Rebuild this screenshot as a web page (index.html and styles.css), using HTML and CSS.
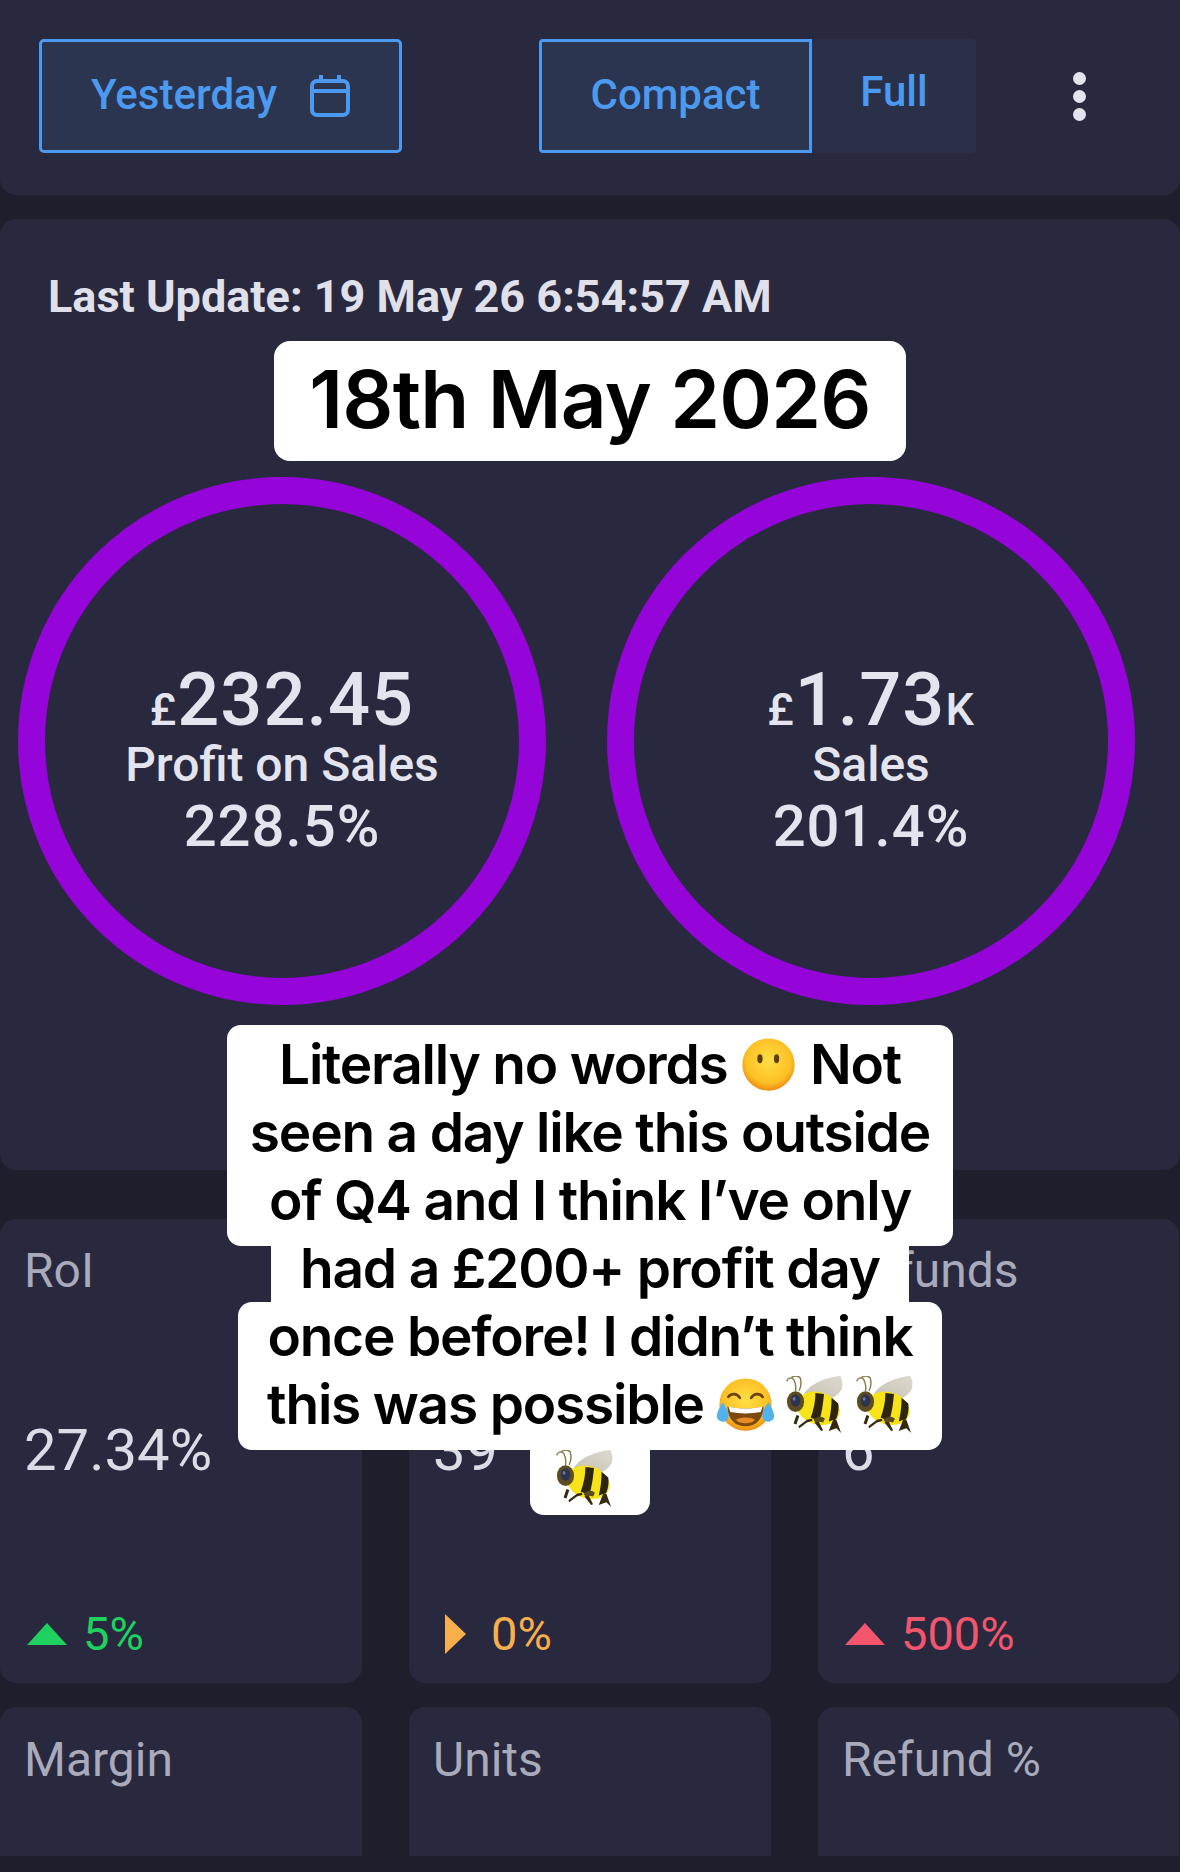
FILE: index.html
```html
<!DOCTYPE html>
<html lang="en">
<head>
<meta charset="utf-8">
<title>Dashboard</title>
<link rel="stylesheet" href="styles.css">
</head>
<body>
<svg class="defs" width="0" height="0" aria-hidden="true">
  <defs>
    <radialGradient id="faceGrad" cx="50%" cy="42%" r="58%">
      <stop offset="0" stop-color="#ffdf45"/>
      <stop offset="0.75" stop-color="#fcc024"/>
      <stop offset="1" stop-color="#ee8c10"/>
    </radialGradient>
    <linearGradient id="wingGrad" x1="1" y1="0" x2="0" y2="1">
      <stop offset="0" stop-color="#ddd9cf"/>
      <stop offset="1" stop-color="#c7c2b4"/>
    </linearGradient>
    <symbol id="bee" viewBox="0 0 60 60">
      <path d="M19 19C24 9 42 1 57 0c3 4 3 12 1 15-3 5-8 8-13 9z" fill="url(#wingGrad)"/>
      <ellipse cx="34" cy="34" rx="23" ry="17" transform="rotate(18 34 34)" fill="#f8e21a"/>
      <path d="M31 18l9 1c-1 10-2 19-5 28l-9-3c3-8 5-17 5-26zM48 23l7 6c1 5 0 11-2 16l-8 3c2-8 3-16 3-25z" fill="#2e2510"/>
      <path d="M8 50l3-9 3 1-3 9zM13 53l9-7 5-1 1 2-6 2-8 6zM30 49l7 9 2-1-5-10zM45 58l5-13 3 1 5 14-5-5-3 1z" fill="#35290f"/>
      <path d="M29 46c4-4 9-4 12-1l-2 4c-3-1-6-1-8 0z" fill="#5b4a1c"/>
      <ellipse cx="10" cy="27" rx="9" ry="11" fill="#5c4c20"/>
      <ellipse cx="10" cy="26" rx="5" ry="6.500" fill="#2c3550"/>
      <ellipse cx="8.500" cy="24" rx="1.500" ry="2" fill="#6d7aa0"/>
      <path d="M10 16C11 10 9 4 7 2.500 5 1.500 2 2 1 5M14 15c2-4 2-9 1-13C13 0 9 0 6.500 1" fill="none" stroke="#8a7a48" stroke-width="1.500" stroke-linecap="round"/>
    </symbol>
    <symbol id="face" viewBox="0 0 60 60">
      <circle cx="30" cy="30" r="27.500" fill="url(#faceGrad)"/>
      <ellipse cx="21" cy="24" rx="2.800" ry="4.700" fill="#5f3f0f"/>
      <ellipse cx="38.500" cy="24" rx="2.800" ry="4.700" fill="#5f3f0f"/>
    </symbol>
    <symbol id="laugh" viewBox="0 0 60 60">
      <circle cx="30" cy="30" r="27.500" fill="url(#faceGrad)"/>
      <path d="M12 22c3-4 9-4 12 1M36 23c3-5 9-5 12-1" fill="none" stroke="#6b430f" stroke-width="2.800" stroke-linecap="round"/>
      <path d="M11 32c12 3 26 3 38 0 0 13-8 21-19 21S11 45 11 32z" fill="#7c4a0d"/>
      <path d="M20 46c5-3 15-3 20 0-3 5-17 5-20 0z" fill="#e98a22"/>
      <path d="M12 32c12 3 24 3 36 0l-2 6c-10 2-22 2-32 0z" fill="#fff"/>
      <path d="M6 28c-4 6-7 12-6 16 1 4 8 6 11 2 3-4 0-12-5-18zM54 28c4 6 7 12 6 16-1 4-8 6-11 2-3-4 0-12 5-18z" fill="#53b2ee"/>
    </symbol>
  </defs>
</svg>

<header class="card toolbar">
  <button class="btn btn-date active"><span class="btn-text">Yesterday</span>
    <svg class="cal" viewBox="0 0 40 42" fill="none" stroke="currentColor" stroke-width="4" stroke-linejoin="round">
      <rect x="2" y="6" width="36" height="34" rx="5"/>
      <path d="M2 16h36M11 0v6M29 0v6"/>
    </svg>
  </button>
  <div class="segment">
    <button class="btn seg-compact active">Compact</button>
    <button class="btn seg-full">Full</button>
  </div>
  <div class="dots"><i></i><i></i><i></i></div>
</header>

<section class="card summary">
  <p class="updated">Last Update: 19 May 26 6:54:57 AM</p>
  <div class="rings">
    <div class="ring">
      <div class="amount"><span class="unit">£</span>232.45</div>
      <div class="ring-label">Profit on Sales</div>
      <div class="pct">228.5%</div>
    </div>
    <div class="ring">
      <div class="amount"><span class="unit">£</span>1.73<span class="unit">K</span></div>
      <div class="ring-label">Sales</div>
      <div class="pct">201.4%</div>
    </div>
  </div>
</section>

<section class="stats">
  <article class="card stat">
    <div class="stat-label">RoI</div>
    <div class="stat-value">27.34%</div>
    <div class="trend up"><span class="tri"></span>5%</div>
  </article>
  <article class="card stat">
    <div class="stat-label">Orders</div>
    <div class="stat-value">39</div>
    <div class="trend flat"><span class="tri"></span>0%</div>
  </article>
  <article class="card stat">
    <div class="stat-label">Refunds</div>
    <div class="stat-value">6</div>
    <div class="trend bad"><span class="tri"></span>500%</div>
  </article>
  <article class="card stat short">
    <div class="stat-label">Margin</div>
  </article>
  <article class="card stat short">
    <div class="stat-label">Units</div>
  </article>
  <article class="card stat short">
    <div class="stat-label">Refund %</div>
  </article>
</section>

<div class="date-tag">18th May 2026</div>

<div class="caption">
  <div class="cap-group g1">
    <div>Literally no words <svg class="emoji"><use href="#face"/></svg> Not</div>
    <div>seen a day like this outside</div>
    <div>of Q4 and I think I’ve only</div>
  </div>
  <div class="cap-group g2">
    <div>had a £200+ profit day</div>
  </div>
  <div class="cap-group g3">
    <div>once before! I didn’t think</div>
    <div>this was possible <svg class="emoji"><use href="#laugh"/></svg> <svg class="emoji"><use href="#bee"/></svg> <svg class="emoji"><use href="#bee"/></svg></div>
  </div>
  <div class="cap-group g4">
    <div><svg class="emoji"><use href="#bee"/></svg></div>
  </div>
</div>
</body>
</html>
```
FILE: styles.css
```css
* { box-sizing: border-box; }
html, body { margin: 0; padding: 0; }
body {
  position: relative;
  width: 1180px;
  height: 1872px;
  overflow: hidden;
  background: #1e1f2d;
  font-family: Roboto, "Liberation Sans", sans-serif;
  color: #e4e4ee;
}
.defs { position: absolute; }
.card { background: #28293e; border-radius: 16px; }

.toolbar {
  height: 195px;
  border-radius: 0 0 16px 16px;
  padding: 39px 0 0 39px;
  display: flex;
  align-items: flex-start;
}
.btn {
  font-family: Roboto, sans-serif;
  font-size: 42px;
  font-weight: 500;
  color: #4b9af0;
  background: #2b3550;
  border: 0;
  padding: 0;
  height: 114px;
}
.active { border: 3px solid #4b9af0; }
.btn-text { padding-bottom: 4px; }
.btn-date {
  width: 363px;
  border-radius: 5px;
  display: flex;
  align-items: center;
  justify-content: center;
  gap: 33px;
}
.cal { width: 40px; height: 42px; }
.segment { display: flex; margin-left: 137px; }
.seg-compact { width: 273px; border-radius: 4px 0 0 4px; padding-bottom: 4px; }
.seg-full {
  width: 164px;
  border-radius: 0 4px 4px 0;
  padding-bottom: 10px;
  background: #2a3048;
}
.dots {
  margin-left: 97px;
  margin-top: 33px;
  display: flex;
  flex-direction: column;
  gap: 5px;
}
.dots i { width: 13px; height: 13px; border-radius: 50%; background: #e4e4ee; }

.summary {
  margin-top: 24px;
  height: 951px;
  padding: 52px 0 0 48px;
  position: relative;
}
.updated { margin: 0; font-size: 45px; font-weight: 700; line-height: 52px; color: #e0e0ea; }
.rings {
  display: flex;
  gap: 61px;
  margin: 154px 0 0 -30px;
}
.ring {
  width: 528px;
  height: 528px;
  border: 27px solid #9504d8;
  border-radius: 50%;
  display: flex;
  flex-direction: column;
  align-items: center;
  justify-content: center;
  padding-top: 50px;
}
.amount { font-size: 74px; font-weight: 500; line-height: 58px; letter-spacing: 1px; }
.unit { font-size: 45px; }
.ring-label { font-size: 48px; font-weight: 500; line-height: 52px; }
.pct { font-size: 58px; font-weight: 500; line-height: 70px; letter-spacing: 1px; }

.stats {
  margin-top: 49px;
  display: grid;
  grid-template-columns: 362px 362px 361px;
  column-gap: 47px;
  row-gap: 24px;
}
.stat { height: 464px; padding: 23px 0 0 24px; display: flex; flex-direction: column; }
.stat.short { height: 149px; padding-top: 24px; border-radius: 16px 16px 0 0; }
.stat-label { font-size: 48px; line-height: 58px; color: #a9aabb; }
.stat-value { font-size: 58px; line-height: 66px; margin-top: 117px; color: #dcdce6; }
.trend { margin-top: 125px; font-size: 47px; line-height: 52px; display: flex; align-items: center; gap: 16px; }
.tri { width: 0; height: 0; }
.up { color: #1fd15f; }
.flat { color: #f8ae4c; gap: 25px; }
.bad { color: #f3566c; }
.up .tri, .bad .tri {
  margin-left: 3px;
  border-left: 20px solid transparent;
  border-right: 20px solid transparent;
  border-bottom: 22px solid currentColor;
}
.flat .tri {
  margin-left: 12px;
  border-top: 20px solid transparent;
  border-bottom: 20px solid transparent;
  border-left: 21px solid currentColor;
}

.date-tag {
  position: absolute;
  left: 274px;
  top: 341px;
  width: 632px;
  height: 120px;
  background: #fff;
  border-radius: 16px;
  color: #000;
  font-family: Inter, sans-serif;
  font-size: 80px;
  font-weight: 600;
  letter-spacing: -0.800px;
  line-height: 116px;
  text-align: center;
}
.caption {
  position: absolute;
  left: 227px;
  top: 1025px;
  width: 726px;
  display: flex;
  flex-direction: column;
  align-items: center;
  color: #000;
  font-family: Inter, sans-serif;
  font-size: 55px;
  font-weight: 600;
  letter-spacing: -1.200px;
  line-height: 68px;
  text-align: center;
}
.cap-group { background: #fff; border-radius: 14px; white-space: nowrap; }
.g1 { width: 726px; height: 221px; padding-top: 5px; }
.g2 { width: 638px; height: 56px; line-height: 44px; border-radius: 0; position: relative; z-index: 1; }
.g3 { width: 704px; height: 148px; }
.g4 { width: 120px; height: 65px; line-height: 36px; padding-right: 12px; border-radius: 0 0 14px 14px; }
.emoji { width: 57px; height: 57px; vertical-align: -8.500px; }
```
